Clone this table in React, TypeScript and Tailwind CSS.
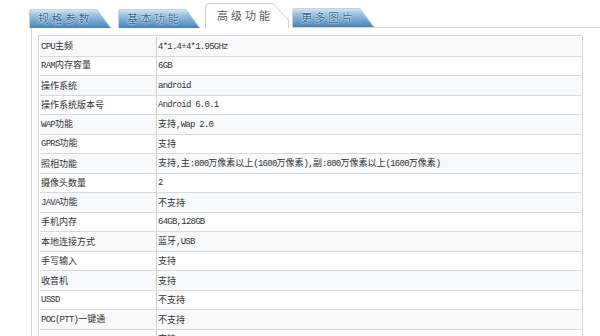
import React from 'react';

const rows: [string, string][] = [
  ['CPU主频', '4*1.4+4*1.95GHz'],
  ['RAM内存容量', '6GB'],
  ['操作系统', 'android'],
  ['操作系统版本号', 'Android 6.0.1'],
  ['WAP功能', '支持,Wap 2.0'],
  ['GPRS功能', '支持'],
  ['照相功能', '支持,主:800万像素以上(1600万像素),副:800万像素以上(1600万像素)'],
  ['摄像头数量', '2'],
  ['JAVA功能', '不支持'],
  ['手机内存', '64GB,128GB'],
  ['本地连接方式', '蓝牙,USB'],
  ['手写输入', '支持'],
  ['收音机', '支持'],
  ['USSD', '不支持'],
  ['POC(PTT)一键通', '不支持'],
  ['', '支持'],
];

// simsun-like: half width latin runs in mono, cjk runs in sans
const Mixed = ({ text }: { text: string }) => (
  <span className="leading-none">
    {text.split(/([\x20-\x7e]+)/).filter(Boolean).map((part, i) =>
      /^[\x20-\x7e]+$/.test(part) ? (
        <span key={i} className="font-['Liberation_Mono',monospace] tracking-[-0.75px] whitespace-pre">
          {part}
        </span>
      ) : (
        <span key={i} className="font-['Noto_Sans_CJK_SC',sans-serif]">{part}</span>
      )
    )}
  </span>
);

const BlueTab = ({ label }: { label: string }) => (
  <div className="relative w-[82px] h-[19px] flex items-center pl-[9px]">
    <svg className="absolute inset-0" width="82" height="19" viewBox="0 0 82 19">
      <defs>
        <linearGradient id="tabg" x1="0" y1="0" x2="0" y2="1">
          <stop offset="0" stopColor="#dfeaf3" />
          <stop offset="0.3" stopColor="#9fc4e0" />
          <stop offset="1" stopColor="#4584b9" />
        </linearGradient>
      </defs>
      <path d="M0 19 V3 Q0 0 3 0 H68 L82 19 Z" fill="url(#tabg)" />
      <path d="M0.5 19 V3 Q0.5 0.5 3 0.5 H68 L81 18" fill="none" stroke="#c4d2dd" strokeWidth="1" />
    </svg>
    <span className="relative text-[11px] tracking-[2.5px] text-[#2c5f92] leading-none [text-shadow:0_0_2px_#fff,0_0_1px_#fff]">
      {label}
    </span>
  </div>
);

const ActiveTab = ({ label }: { label: string }) => (
  <div className="relative w-[84px] h-[25px] flex items-center pl-[12px] pb-[1px]">
    <svg className="absolute inset-0" width="84" height="25" viewBox="0 0 84 25">
      <path d="M0.5 25 V4 Q0.5 0.5 4 0.5 H68 L83.5 17 V25" fill="#ffffff" stroke="#cfcfcf" strokeWidth="1" />
    </svg>
    <span className="relative text-[11px] tracking-[3px] text-[#5a5a5a] leading-none">{label}</span>
  </div>
);

export default function App() {
  return (
    <div className="w-[600px] h-[336px] overflow-hidden bg-white font-['Noto_Sans_CJK_SC',sans-serif]">
      <div className="flex items-end h-[28px] pl-[29px]">
        <div className="flex items-end gap-[7px]">
          <BlueTab label="规格参数" />
          <BlueTab label="基本功能" />
        </div>
        <div className="ml-[5px]">
          <ActiveTab label="高级功能" />
        </div>
        <div className="ml-[3px] h-[20px] border-b border-[#d4d4d4] pb-[1px]">
          <BlueTab label="更多图片" />
        </div>
        <div className="flex-1 h-[2px] border-b border-[#d4d4d4]" />
      </div>
      <div className="ml-[31px] border-l border-[#d8d8d8] pl-[6px] pt-[7px] h-[308px]">
        <div className="w-[545px] border border-[#d6d6d6] border-b-0 p-[1px]">
          {rows.map(([k, v], i) => (
            <div
              key={i}
              className={`grid grid-cols-[117px_1fr] h-[19.5px] border-b border-[#dadada] text-[9px] text-[#333] leading-none ${
                i % 2 === 0 ? 'bg-[#f8f9fb]' : 'bg-white'
              }`}
            >
              <div className="flex items-center pl-[1px] border-r border-[#d0d0d0] whitespace-nowrap">
                <Mixed text={k} />
              </div>
              <div className="flex items-center pl-[1px] whitespace-nowrap">
                <Mixed text={v} />
              </div>
            </div>
          ))}
        </div>
      </div>
    </div>
  );
}
